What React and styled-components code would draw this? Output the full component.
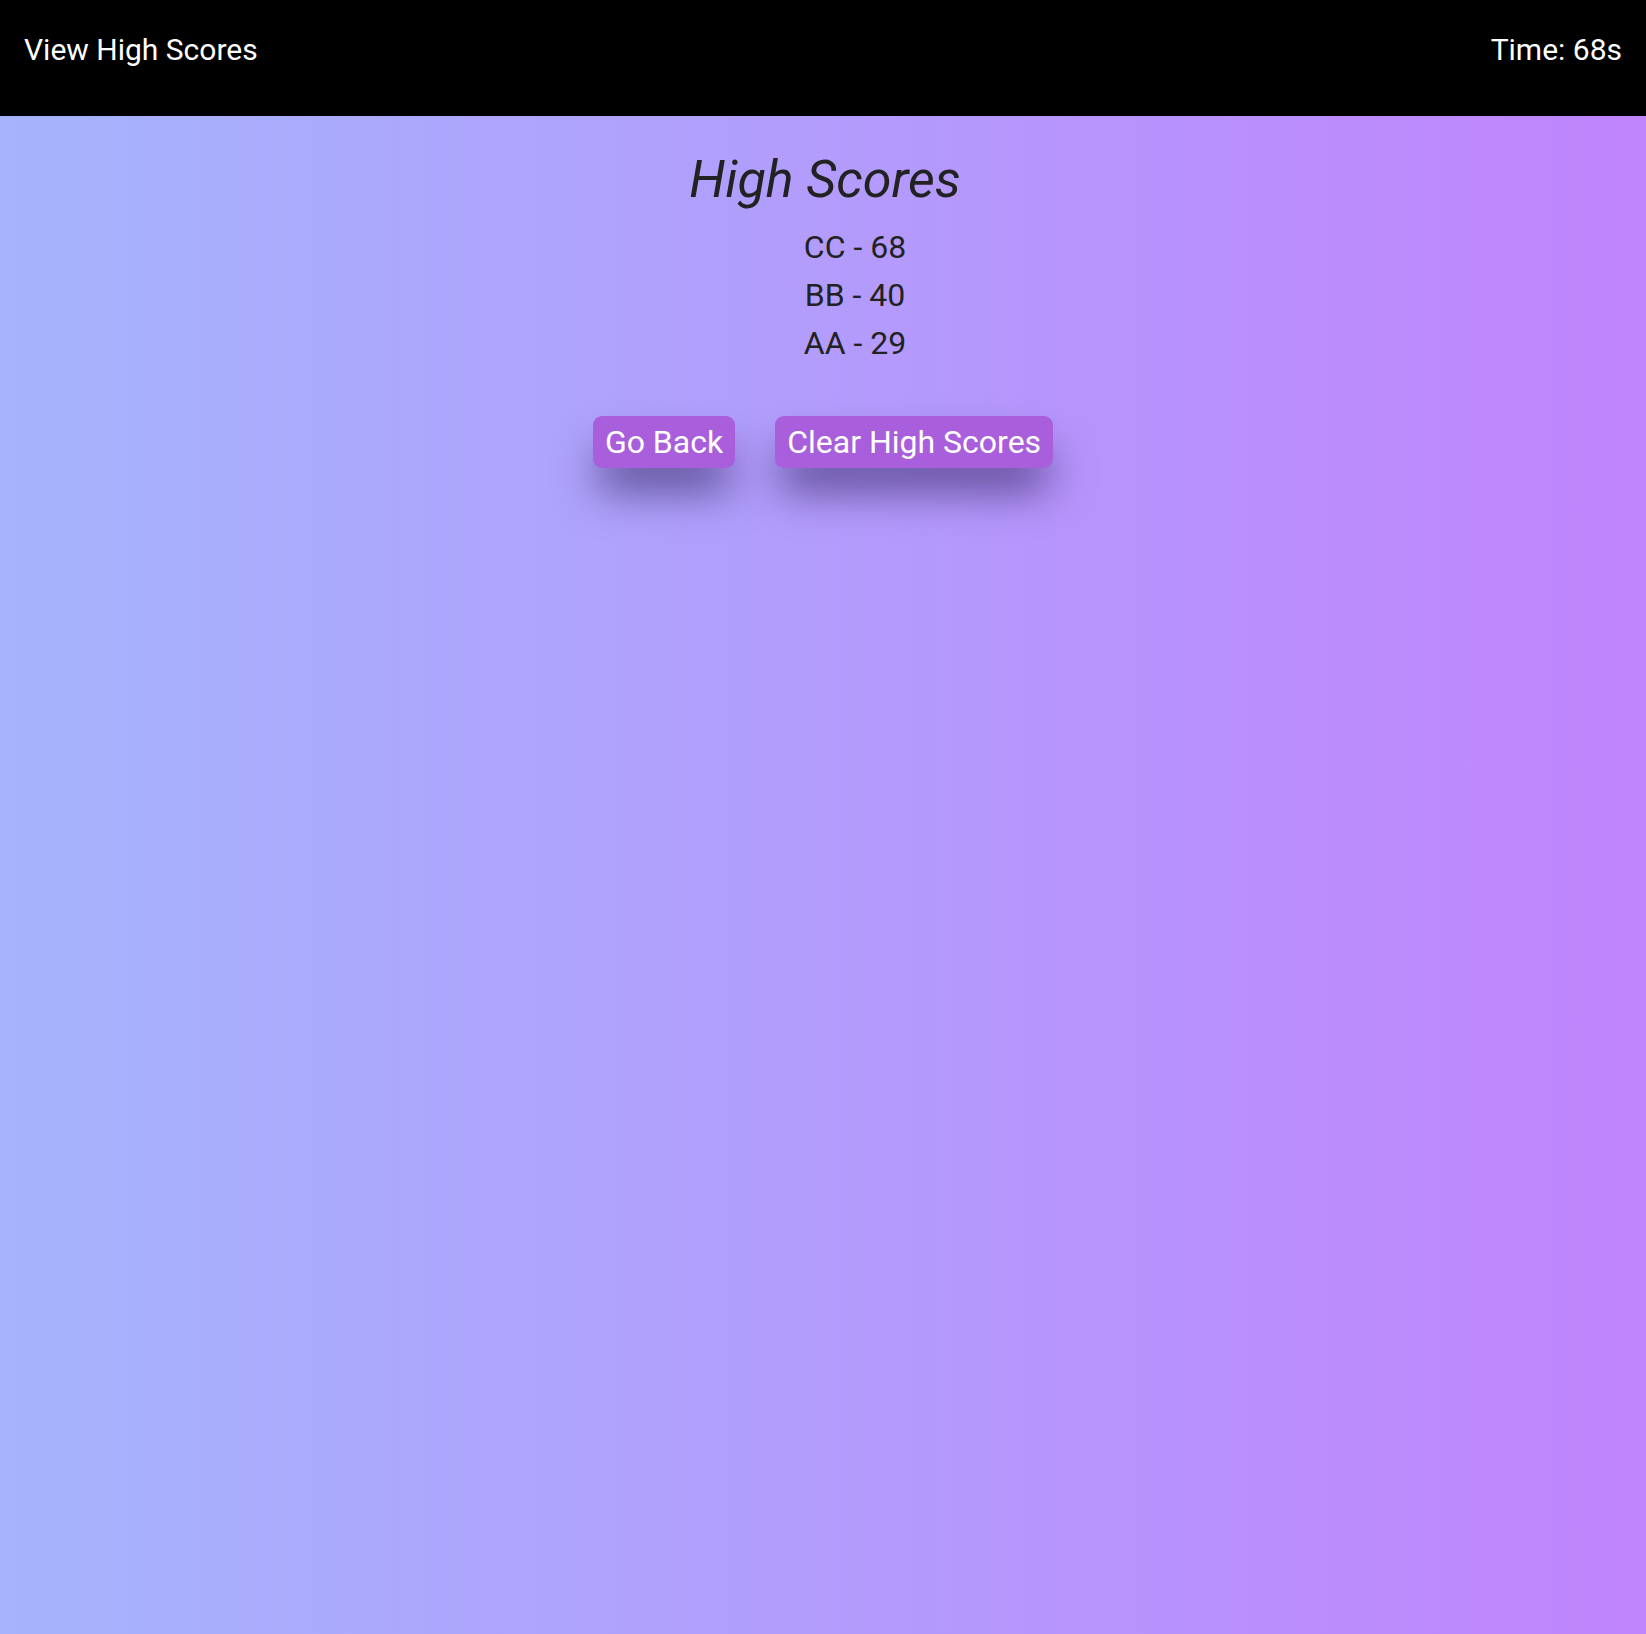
import React from "react";
import styled, { createGlobalStyle } from "styled-components";

const Global = createGlobalStyle`
  html, body { margin: 0; padding: 0; }
  body {
    font-family: Roboto, "Liberation Sans", sans-serif;
    min-height: 100vh;
  }
  #root { min-height: 100vh; }
`;

const Page = styled.div`
  min-height: 100vh;
  display: flex;
  flex-direction: column;
  background: linear-gradient(to right, #a5b4fc, #c084fc);
`;

const Header = styled.header`
  height: 116px;
  box-sizing: border-box;
  background: #000;
  color: #fff;
  display: flex;
  justify-content: space-between;
  align-items: flex-start;
  padding: 32px 24px 0 24px;
  font-size: 30px;
`;

const HeaderItem = styled.div`
  line-height: normal;
  cursor: ${(p) => (p.$link ? "pointer" : "default")};
`;

const Main = styled.main`
  display: flex;
  flex-direction: column;
  align-items: center;
  padding-top: 33px;
  color: #222;
`;

const Title = styled.h1`
  margin: 0 0 0 4px;
  font-size: 52px;
  font-style: italic;
  font-weight: 400;
  line-height: normal;
`;

const ScoreList = styled.ul`
  list-style: none;
  margin: 13px 0 0;
  padding: 0 0 0 64px;
  text-align: center;
`;

const ScoreItem = styled.li`
  font-size: 32px;
  line-height: 48px;
`;

const Actions = styled.div`
  display: flex;
  gap: 40px;
  margin-top: 49px;
`;

const Button = styled.button`
  font-family: Roboto, "Liberation Sans", sans-serif;
  font-size: 32px;
  line-height: normal;
  color: #fff;
  background: #a95edb;
  border: none;
  border-radius: 9px;
  padding: 7px 12px;
  box-shadow: 0 28px 44px -6px rgba(30, 15, 70, 0.6);
  cursor: pointer;
`;

const scores = [
  { name: "CC", score: 68 },
  { name: "BB", score: 40 },
  { name: "AA", score: 29 },
];

export default function App() {
  return (
    <>
      <Global />
      <Page>
        <Header>
          <HeaderItem $link>View High Scores</HeaderItem>
          <HeaderItem>Time: 68s</HeaderItem>
        </Header>
        <Main>
          <Title>High Scores</Title>
          <ScoreList>
            {scores.map((s) => (
              <ScoreItem key={s.name}>
                {s.name} - {s.score}
              </ScoreItem>
            ))}
          </ScoreList>
          <Actions>
            <Button>Go Back</Button>
            <Button>Clear High Scores</Button>
          </Actions>
        </Main>
      </Page>
    </>
  );
}
